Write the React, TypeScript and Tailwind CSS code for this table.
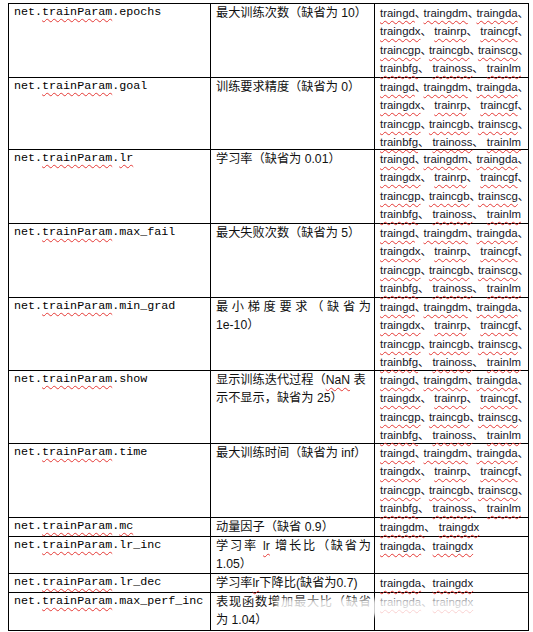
import type { ReactNode } from "react"

const wavy = "underline decoration-wavy decoration-[#e53935] decoration-1 underline-offset-[3px]"

function W({ children }: { children: ReactNode }) {
  return <span className={wavy}>{children}</span>
}

// narrow ideographic comma, the way Word squeezes it between latin words
function Dun() {
  return <span className="mr-[-3px]">、</span>
}

const fullList = [
  ["traingd", "traingdm", "traingda"],
  ["traingdx", "trainrp", "traincgf"],
  ["traincgp", "traincgb", "trainscg"],
  ["trainbfg", "trainoss", "trainlm"],
]

function FullAlgos() {
  return (
    <div>
      {fullList.map((line, i) => (
        <div key={i} className={`flex justify-between h-[18.25px] items-center ${i === 3 ? "pr-[5px]" : ""}`}>
          {line.map((w, j) => (
            <span key={j} className="whitespace-nowrap">
              <W>{w}</W>
              {!(i === 3 && j === 2) && <Dun />}
            </span>
          ))}
        </div>
      ))}
    </div>
  )
}

function ShortAlgos({ a, b, gap }: { a: string; b: string; gap?: boolean }) {
  return (
    <div className="h-[18px] flex items-center">
      <W>{a}</W>
      <span>、</span>
      {gap && <span className="w-[3px]" />}
      <W>{b}</W>
    </div>
  )
}

function Param({ name, mark }: { name: string; mark?: boolean }) {
  return (
    <div className="h-[18px] flex items-center whitespace-pre">
      net.<W>trainParam</W>.{mark ? <W>{name}</W> : name}
    </div>
  )
}

function Just({ children }: { children: ReactNode }) {
  return <div className="h-[18px] leading-[18px] text-justify [text-align-last:justify] whitespace-nowrap">{children}</div>
}

function Line({ children }: { children: ReactNode }) {
  return <div className="h-[18px] leading-[18px] whitespace-nowrap">{children}</div>
}

type Row = { name: string; mark?: boolean; desc: ReactNode; algos: ReactNode; h: string }

const rows: Row[] = [
  { name: "epochs", desc: <Line>最大训练次数（缺省为 10）</Line>, algos: <FullAlgos />, h: "h-[74px]" },
  { name: "goal", desc: <Line>训练要求精度（缺省为 0）</Line>, algos: <FullAlgos />, h: "h-[72px]" },
  { name: "lr", mark: true, desc: <Line>学习率（缺省为 0.01）</Line>, algos: <FullAlgos />, h: "h-[74px]" },
  { name: "max_fail", desc: <Line>最大失败次数（缺省为 5）</Line>, algos: <FullAlgos />, h: "h-[74px]" },
  {
    name: "min_grad",
    desc: (
      <>
        <Just>最小梯度要求（缺省为</Just>
        <Line>1e-10）</Line>
      </>
    ),
    algos: <FullAlgos />,
    h: "h-[73px]",
  },
  {
    name: "show",
    desc: (
      <>
        <Line>
          显示训练迭代过程（<W>NaN</W> 表
        </Line>
        <Line>示不显示，缺省为 25）</Line>
      </>
    ),
    algos: <FullAlgos />,
    h: "h-[73px]",
  },
  { name: "time", desc: <Line>最大训练时间（缺省为 inf）</Line>, algos: <FullAlgos />, h: "h-[74px]" },
  { name: "mc", mark: true, desc: <Line>动量因子（缺省 0.9）</Line>, algos: <ShortAlgos a="traingdm" b="traingdx" gap />, h: "h-[19px]" },
  {
    name: "lr_inc",
    desc: (
      <>
        <Just>
          学习率 <W>lr</W> 增长比（缺省为
        </Just>
        <Line>1.05）</Line>
      </>
    ),
    algos: <ShortAlgos a="traingda" b="traingdx" />,
    h: "h-[37px]",
  },
  {
    name: "lr_dec",
    desc: (
      <Line>
        学习率<W>lr</W>下降比(缺省为0.7)
      </Line>
    ),
    algos: <ShortAlgos a="traingda" b="traingdx" />,
    h: "h-[19px]",
  },
  {
    name: "max_perf_inc",
    desc: (
      <>
        <Just>表现函数增加最大比（缺省</Just>
        <Line>为 1.04）</Line>
      </>
    ),
    algos: <ShortAlgos a="traingda" b="traingdx" />,
    h: "h-[38px]",
  },
]

export default function App() {
  return (
    <div className="relative w-[533px] h-[632px] bg-white overflow-hidden pt-[3px] pl-[8px] text-[#111]">
      <div className="w-[521px] border-l border-t border-black">
        {rows.map((r, i) => (
          <div key={i} className={`grid grid-cols-[202px_164px_154px] border-b border-black ${r.h}`}>
            <div className="border-r border-black pl-[5px] text-[11.7px] font-['Liberation_Mono',monospace] text-black">
              <Param name={r.name} mark={r.mark} />
            </div>
            <div className="border-r border-black pl-[5px] pr-[3px] text-[12.2px] font-['Liberation_Sans','Noto_Sans_CJK_SC',sans-serif]">
              {r.desc}
            </div>
            <div className="border-r border-black pl-[5px] pr-[2px] text-[11.4px] leading-[18px] text-[#15151f] font-['Liberation_Sans','Noto_Sans_CJK_SC',sans-serif]">
              {r.algos}
            </div>
          </div>
        ))}
      </div>
      {/* faded smear over the last row */}
      <div className="absolute left-[276px] top-[599px] w-[200px] h-[17px] bg-white/80 blur-[2px]" />
    </div>
  )
}
